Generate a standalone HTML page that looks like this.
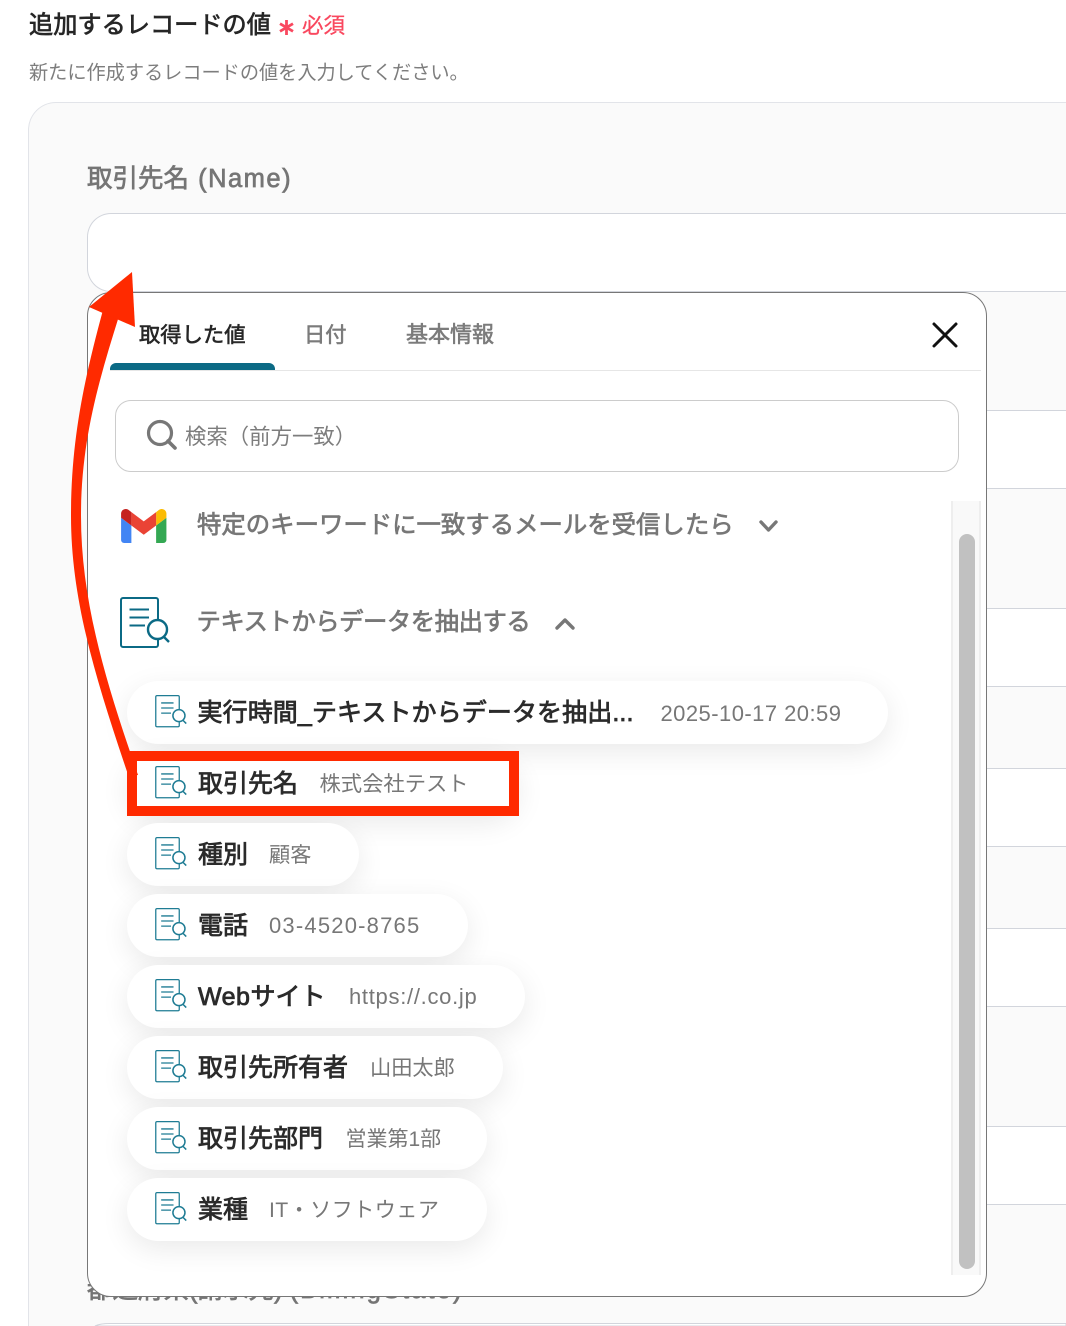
<!DOCTYPE html>
<html lang="ja"><head><meta charset="utf-8"><title>追加するレコードの値</title>
<style>
html,body{margin:0;padding:0;background:#fff;width:1066px;height:1326px;overflow:hidden}
#p{position:relative;width:1066px;height:1326px;overflow:hidden;background:#fff;font-family:"Liberation Sans","Noto Sans CJK JP",sans-serif}
#p div{position:absolute;white-space:nowrap;box-sizing:border-box}
.card{left:28px;top:102px;width:1038px;height:1224px;background:#fafafa;border:1px solid #e2e4e9;border-right:0;border-bottom:0;border-radius:28px 0 0 0}
.in{left:87px;width:979px;background:#fff;border:1px solid #d2d5dc;border-right:0;border-radius:24px 0 0 24px}
.modal{left:87px;top:292px;width:900px;height:1005px;background:#fff;border:1.5px solid #777;border-radius:24px}
.pill{left:127px;height:63px;background:#fff;border-radius:32px;box-shadow:0 8px 28px rgba(0,0,0,.085)}
.n{top:2px;line-height:61px;font-size:25px;color:#2b2b2b;left:71px;-webkit-text-stroke:.8px #2b2b2b}
.v{top:2px;line-height:61px;font-size:21.2px;color:#777}
.ic{position:absolute;left:155px;width:32px;height:33px;overflow:visible}
.tab{font-size:21.3px;line-height:30px;top:320px;-webkit-text-stroke:.6px currentColor}
.h{font-size:24.4px;line-height:34px;color:#777;left:197px;-webkit-text-stroke:.7px #777}
.lb{left:87px;font-size:25.5px;line-height:36px;color:#757575;-webkit-text-stroke:.7px #757575}
svg{position:absolute;overflow:visible}
</style></head><body>
<div id="p">
<div style="left:29px;top:8px;font-size:24.2px;line-height:36px;color:#262626;-webkit-text-stroke:.7px #262626">追加するレコードの値</div>
<svg style="left:278px;top:19px" width="17" height="17" viewBox="0 0 17 17"><path d="M8.5 1V16M2 4.7L15 12.3M15 4.7L2 12.3" stroke="#f9485f" stroke-width="2.8" fill="none"/></svg>
<div style="left:302px;top:8px;font-size:21.5px;line-height:36px;color:#f9485f;-webkit-text-stroke:.3px #f9485f">必須</div>
<div style="left:29px;top:59.5px;font-size:19.2px;line-height:28px;color:#7d7d7d;letter-spacing:-.02px">新たに作成するレコードの値を入力してください。</div>
<div class="card"></div>
<div class="lb" style="top:161px">取引先名 <span style="letter-spacing:1.5px;margin-left:2px">(Name)</span></div>
<div class="in" style="top:213px;height:79px"></div>
<div class="in" style="top:410px;height:79px"></div>
<div class="in" style="top:608px;height:79px"></div>
<div class="in" style="top:768px;height:79px"></div>
<div class="in" style="top:928px;height:79px"></div>
<div class="in" style="top:1126px;height:79px"></div>
<div class="lb" style="top:1272px">都道府県(請求先) <span style="letter-spacing:2.1px">(BillingState)</span></div>
<svg style="left:0;top:0" width="1066" height="1326" viewBox="0 0 1066 1326"><path d="M95 1326Q100 1323.5 110 1323.5H1066V1326Z" fill="#fff" stroke="#d2d5dc" stroke-width="1"/></svg>

<div class="modal"></div>
<div class="tab" style="left:139px;color:#262626">取得した値</div>
<div class="tab" style="left:304px;color:#7b7b7b">日付</div>
<div class="tab" style="left:406px;font-size:22px;color:#7b7b7b">基本情報</div>
<div style="left:110px;top:370px;width:871px;height:1px;background:#e6e6e6"></div>
<div style="left:110px;top:363px;width:165px;height:7px;background:#0b6a85;border-radius:6px 6px 0 0"></div>
<div style="left:115px;top:400px;width:844px;height:72px;background:#fff;border:1px solid #ccc;border-radius:16px"></div>
<svg style="left:0;top:0" width="1066" height="1326" viewBox="0 0 1066 1326">
<path d="M934 324L956 346M956 324L934 346" stroke="#111" stroke-width="3" stroke-linecap="round" fill="none"/>
<circle cx="160" cy="433" r="11.5" stroke="#777" stroke-width="3.2" fill="none"/>
<path d="M168 441L175 448" stroke="#777" stroke-width="3.6" stroke-linecap="round"/>
<path d="M761 522L768.5 530L776 522" stroke="#777" stroke-width="3.4" stroke-linecap="round" stroke-linejoin="round" fill="none"/>
<path d="M557 628L565 620L573 628" stroke="#777" stroke-width="3.4" stroke-linecap="round" stroke-linejoin="round" fill="none"/>
</svg>
<div style="left:185px;top:422px;font-size:21.4px;line-height:30px;color:#7d7d7d">検索（前方一致）</div>

<svg style="left:121px;top:509px" width="45.5" height="34" viewBox="52 42 88 66">
<path fill="#4285f4" d="M58 108h14V74L52 59v43c0 3.32 2.69 6 6 6"/>
<path fill="#34a853" d="M120 108h14c3.32 0 6-2.69 6-6V59l-20 15"/>
<path fill="#fbbc04" d="M120 48v26l20-15v-8c0-7.42-8.47-11.65-14.4-7.2"/>
<path fill="#ea4335" d="M72 74V48l24 18 24-18v26L96 92"/>
<path fill="#c5221f" d="M52 51v8l20 15V48l-5.6-4.2c-5.94-4.45-14.4-.22-14.4 7.2"/>
</svg>
<div class="h" style="top:509px">特定のキーワードに一致するメールを受信したら</div>

<svg width="0" height="0" style="left:0;top:0"><defs>
<g id="doc">
<rect x="1" y="1" width="37" height="49" rx="2" fill="none" stroke="currentColor" stroke-width="2"/>
<path d="M9.5 12.5H29M9.5 20.5H29M9.5 28.5H25" stroke="currentColor" stroke-width="2" fill="none"/>
<circle cx="37.5" cy="32.5" r="9.5" fill="#fff" stroke="currentColor" stroke-width="2.4"/>
<path d="M44 40L49 45" stroke="currentColor" stroke-width="2.4"/>
</g></defs></svg>
<svg style="left:120px;top:597px;color:#0b6a85" width="50" height="52" viewBox="0 0 50 52"><use href="#doc"/></svg>
<div class="h" style="top:606px;left:196.5px;letter-spacing:-.5px">テキストからデータを抽出する</div>

<div style="left:951px;top:501px;width:30px;height:774px;background:#f9f9f9;border-left:2px solid #eee;border-right:2px solid #eee"></div>
<div style="left:959px;top:534px;width:16px;height:735px;background:#c1c1c1;border-radius:8px"></div>

<div class="pill" style="top:681px;width:761px"><div class="n" style="left:70.5px;letter-spacing:.1px">実行時間_テキストからデータを抽出...</div><div class="v" style="left:533.5px;font-size:22px;letter-spacing:.45px">2025-10-17 20:59</div></div>
<div class="pill" style="top:752px;width:392px"><div class="n">取引先名</div><div class="v" style="left:192.5px;font-size:21.3px">株式会社テスト</div></div>
<div class="pill" style="top:823px;width:232px"><div class="n">種別</div><div class="v" style="left:142px">顧客</div></div>
<div class="pill" style="top:894px;width:341px"><div class="n">電話</div><div class="v" style="left:142px;font-size:22px;letter-spacing:1.2px;top:1px">03-4520-8765</div></div>
<div class="pill" style="top:965px;width:398px"><div class="n"><span style="letter-spacing:.5px">Web</span>サイト</div><div class="v" style="left:222px;font-size:22px;letter-spacing:.7px;top:1px">https://.co.jp</div></div>
<div class="pill" style="top:1036px;width:376px"><div class="n">取引先所有者</div><div class="v" style="left:243px">山田太郎</div></div>
<div class="pill" style="top:1107px;width:360px"><div class="n">取引先部門</div><div class="v" style="left:218.5px;font-size:21px">営業第1部</div></div>
<div class="pill" style="top:1178px;width:360px"><div class="n">業種</div><div class="v" style="left:142px;letter-spacing:.35px">IT・ソフトウェア</div></div>

<svg class="ic" style="top:695px;color:#1f7c94" viewBox="0 0 50 52"><use href="#doc"/></svg>
<svg class="ic" style="top:766px;color:#1f7c94" viewBox="0 0 50 52"><use href="#doc"/></svg>
<svg class="ic" style="top:837px;color:#1f7c94" viewBox="0 0 50 52"><use href="#doc"/></svg>
<svg class="ic" style="top:908px;color:#1f7c94" viewBox="0 0 50 52"><use href="#doc"/></svg>
<svg class="ic" style="top:979px;color:#1f7c94" viewBox="0 0 50 52"><use href="#doc"/></svg>
<svg class="ic" style="top:1050px;color:#1f7c94" viewBox="0 0 50 52"><use href="#doc"/></svg>
<svg class="ic" style="top:1121px;color:#1f7c94" viewBox="0 0 50 52"><use href="#doc"/></svg>
<svg class="ic" style="top:1192px;color:#1f7c94" viewBox="0 0 50 52"><use href="#doc"/></svg>

<svg style="left:0;top:0" width="1066" height="1326" viewBox="0 0 1066 1326">
<path d="M128.5 776C96 680 71 600 71 516C71 440 84 380 103 310L119 316C99 380 81 440 81 516C81 600 105 680 138 775Z" fill="#ff2a00"/>
<path d="M132 272L135 327L89 307Z" fill="#ff2a00"/>
<rect x="132" y="756" width="382" height="55" fill="none" stroke="#ff2a00" stroke-width="10"/>
</svg>
</div>
</body></html>
